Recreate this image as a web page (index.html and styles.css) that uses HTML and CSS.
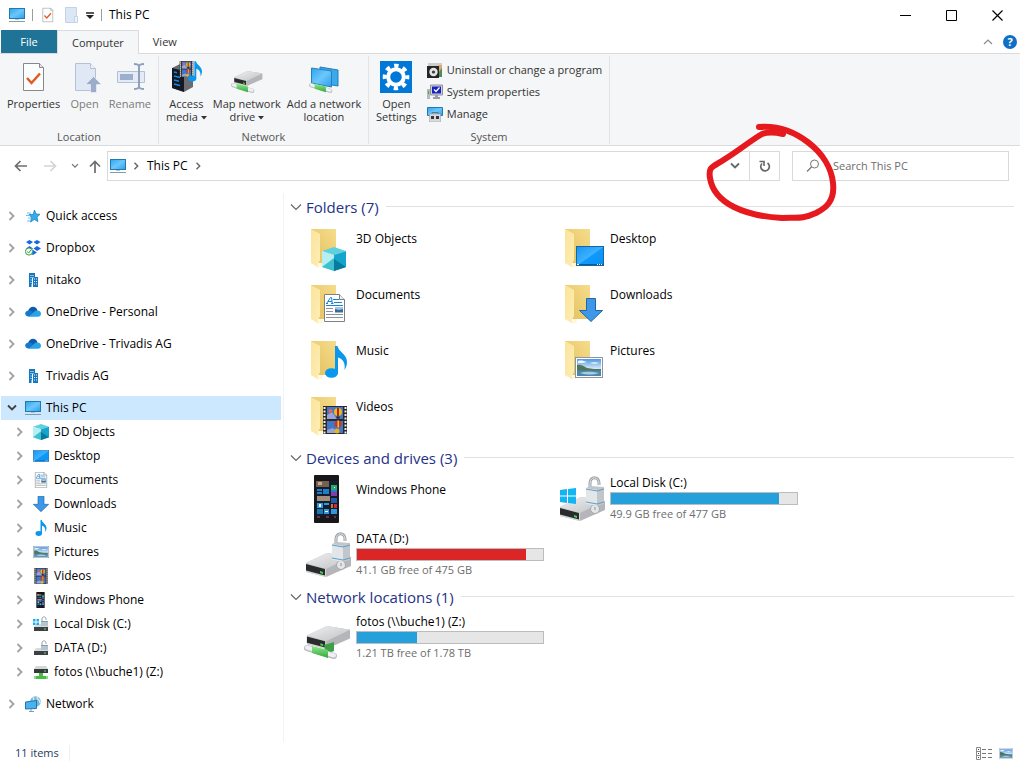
FILE: index.html
```html
<!DOCTYPE html>
<html lang="en">
<head>
<meta charset="utf-8">
<meta name="viewport" content="width=device-width, initial-scale=1">
<title>This PC</title>
<link rel="stylesheet" href="styles.css">
</head>
<body>
<svg class="sprite" width="0" height="0" aria-hidden="true">
  <defs>
    <linearGradient id="g-screen" x1="0" y1="0" x2="1" y2="1"><stop offset="0" stop-color="#2ba4f0"/><stop offset=".5" stop-color="#6cc7fb"/><stop offset="1" stop-color="#2a9df0"/></linearGradient>
    <linearGradient id="g-desk" x1="0" y1="0" x2="1" y2="1"><stop offset="0" stop-color="#1593f7"/><stop offset=".5" stop-color="#3eb2ff"/><stop offset=".52" stop-color="#0f99fb"/><stop offset="1" stop-color="#0a91f5"/></linearGradient>
    <linearGradient id="g-flap" x1="0" y1="0" x2="1" y2="1"><stop offset="0" stop-color="#fbe49b"/><stop offset="1" stop-color="#fdeeb4"/></linearGradient>
    <linearGradient id="g-back" x1="0" y1="1" x2="1" y2="0"><stop offset="0" stop-color="#e3bf5d"/><stop offset="1" stop-color="#f6dc8b"/></linearGradient>
    <linearGradient id="g-metal" x1="0" y1="0" x2="1" y2="1"><stop offset="0" stop-color="#f1f1f2"/><stop offset="1" stop-color="#bfc0c3"/></linearGradient>
    <linearGradient id="g-sky" x1="0" y1="0" x2="0" y2="1"><stop offset="0" stop-color="#4f97e2"/><stop offset=".6" stop-color="#dcedf8"/></linearGradient>
    <linearGradient id="g-green" x1="0" y1="0" x2="0" y2="1"><stop offset="0" stop-color="#8ee88d"/><stop offset="1" stop-color="#34a83c"/></linearGradient>
  </defs>

  <symbol id="i-pc" viewBox="0 0 16 16"><rect x=".5" y="1.5" width="15" height="10" fill="url(#g-screen)" stroke="#2379ad"/><path d="M6 12h4v1H6z" fill="#a9c7d8"/><path d="M0 14.5h16" stroke="#8a9aa4"/></symbol>
  <symbol id="i-cube" viewBox="0 0 24 24"><path d="M12 0l12 4-12 4L0 4z" fill="#5fd0e0"/><path d="M0 4l12 4v16L0 20z" fill="#b4eff3"/><path d="M0 20l12-9v13z" fill="#3fbfd0"/><path d="M12 8l12-4v16l-12 4z" fill="#16a4cd"/><path d="M12 24V12l12 8z" fill="#087a9c"/></symbol>
  <symbol id="i-desktop" viewBox="0 0 28 20"><rect x=".5" y=".5" width="27" height="19" fill="url(#g-desk)" stroke="#17679f"/><path d="M1 18h26v1H1z" fill="#0a5c98"/><path d="M1 18h2v1H1zM21 18h1v1h-1zm2 0h1v1h-1zm2 0h1v1h-1z" fill="#fff"/></symbol>
  <symbol id="i-doc" viewBox="0 0 21 28"><path d="M.5.500h15l5 5v22H.5z" fill="#fff" stroke="#7d8184"/><path d="M15.500.5v5h5" fill="#eee" stroke="#7d8184"/><path d="M2.500 9.500L6.500 3.500h1l.8 6M4 7.500h4M2 9.500h2M7 9.500h2.500" fill="none" stroke="#1b84d2"/><path d="M9 5.500h6M10 8.500h8M2 11.500h17" stroke="#1b84d2"/><path d="M2 14.500h7M2 17.500h7M2 20.500h17M2 23.500h17" stroke="#8c9296"/><path d="M11 13h8v5.500h-8z" fill="#3c6c92"/><path d="M11 13h8v2l-4 1-4-1z" fill="#9dc9ea"/></symbol>
  <symbol id="i-down" viewBox="0 0 24 24"><path d="M7.500.5h9v12h7L12 23.500.5 12.500h7z" fill="#3e97e8" stroke="#1d69a8"/></symbol>
  <symbol id="i-note" viewBox="0 0 22 32"><ellipse cx="6.500" cy="27" rx="6.500" ry="4.800" fill="#0a97ee"/><path d="M10 27V0h2.500c1 6 9.500 8 9.500 16 0 3-1 6-2.500 8 1-6-1-11-6.500-12.500V27z" fill="#0a97ee"/></symbol>
  <symbol id="i-picture" viewBox="0 0 28 21"><rect x=".5" y=".5" width="27" height="20" fill="#fff" stroke="#8997a0"/><path d="M2 2h24v17H2z" fill="url(#g-sky)"/><path d="M3 4c3-1 6 0 9 1-3 1-6 1-9 1zM15 6c3-1 6-1 9 0-3 1-6 1-9 0z" fill="#f2f8fd"/><path d="M2 8c4-1 6 1 10 3 5 1 9 1 14 1v2H2z" fill="#50765a"/><path d="M2 13.500h24V19H2z" fill="#4d87b0"/><path d="M5 16c6-2 12-1 19 0-6 2-12 2-19 0z" fill="#a9cde0"/></symbol>
  <symbol id="i-film" viewBox="0 0 24 28"><path d="M0 0h24v28H0z" fill="#2b2a28"/><path d="M1.500 1v27M22.500 1v27" stroke="#f2f2f2" stroke-width="2" stroke-dasharray="2 1.500"/><path d="M4 1h16v12H4zM4 15h16v12H4z" fill="#4277c8"/><path d="M4 9l5-3 5 7H4zM4 24l6-2 5 5H4z" fill="#9ba2d6"/><circle cx="15" cy="6" r="4" fill="#eeb720"/><path d="M14 2h2v8h-2z" fill="#a8291f"/><path d="M13.500 10.500h3v2h-3z" fill="#3b1d24"/><circle cx="15" cy="18" r="3.500" fill="#c23a2b"/><path d="M14.500 14.500h1.500v7h-1.500z" fill="#f0c02c"/><circle cx="14" cy="25" r="2.500" fill="#e9b31f"/><circle cx="7.500" cy="5" r="2" fill="#e1675c"/></symbol>
  <symbol id="i-folder" viewBox="0 0 48 48"><path d="M7 5h25v34H7z" fill="url(#g-back)"/><path d="M7 5l9 5v26l-2 4 1 4-8-5z" fill="url(#g-flap)"/><path d="M15.500 39h3v5l-4-2z" fill="#fff6dc"/></symbol>
  <symbol id="i-f-cube" viewBox="0 0 48 48"><use href="#i-folder"/><use href="#i-cube" x="18" y="23" width="24" height="24"/></symbol>
  <symbol id="i-f-desk" viewBox="0 0 48 48"><use href="#i-folder"/><use href="#i-desktop" x="18" y="22" width="28" height="20"/></symbol>
  <symbol id="i-f-doc" viewBox="0 0 48 48"><use href="#i-folder"/><use href="#i-doc" x="20" y="14" width="21" height="28"/></symbol>
  <symbol id="i-f-down" viewBox="0 0 48 48"><use href="#i-folder"/><use href="#i-down" x="21" y="18" width="24" height="24"/></symbol>
  <symbol id="i-f-note" viewBox="0 0 48 48"><use href="#i-folder"/><use href="#i-note" x="21" y="10" width="22" height="32"/></symbol>
  <symbol id="i-f-pic" viewBox="0 0 48 48"><use href="#i-folder"/><use href="#i-picture" x="17" y="21" width="28" height="21"/></symbol>
  <symbol id="i-f-film" viewBox="0 0 48 48"><use href="#i-folder"/><use href="#i-film" x="19" y="14" width="24" height="28"/></symbol>

  <symbol id="i-phone" viewBox="0 0 48 48"><rect x="10" y="0" width="25" height="48" rx="1" fill="#17171a"/><path d="M12 6h21v35H12z" fill="#151d2d"/><path d="M12 6h13v6H12z" fill="#76604f"/><path d="M14 7h4v3h-4z" fill="#c9a88d"/><path d="M27 12h6v5h-6zM19 14h6v5h-6zM13 14h5v2h-5zM13 17h5v2h-5z" fill="#1c7fc9"/><path d="M27 10h6v5h-6z" fill="#2aa772"/><path d="M27 17h6v4h-6z" fill="#843ba8"/><path d="M13 21h13v5H13z" fill="#a48d79"/><path d="M27 23h6v5h-6z" fill="#245ba6"/><path d="M13 28h6v5h-6zM20 28h5v2h-5zM20 34h5v5h-5zM27 34h6v5h-6z" fill="#2b9ae0"/><path d="M27 29h2v4h-2z" fill="#e46922"/><path d="M30 29h3v4h-3z" fill="#c52f35"/><path d="M13 34h6v5h-6z" fill="#1879b8"/><path d="M13 42h3M22 42h3M30 42h2" stroke="#b4577c"/><path d="M15 29h2v3h-2zM21 36h3v1h-3zM30 12h1v1h-1z" fill="#fff"/></symbol>
  <symbol id="i-box" viewBox="0 0 48 24"><path d="M2 10L23 0l24 4v9L22 24 2 19z" fill="#b5b6b9"/><path d="M2 10L23 0l24 4-25 12z" fill="url(#g-metal)"/><path d="M2 10l20 6v8L2 19z" fill="#d7d7d8"/><path d="M2 11l19 5v6.500L2 17.500z" fill="#292b2d"/><path d="M16 18l3 1v2l-3-1z" fill="#3edb44"/></symbol>
  <symbol id="i-lock" viewBox="0 0 20 38"><path d="M5 16V7c0-7 9-7 9 0v2" fill="none" stroke="#9da3a8" stroke-width="3"/><path d="M5 16V7c0-7 9-7 9 0v2" fill="none" stroke="#dfe2e4"/><circle cx="10" cy="33" r="4.500" fill="#e4e5e7" stroke="#a5a8ab"/><path d="M1 12l5-2 13 1v17l-7 2-11-2z" fill="#c2c6ca"/><path d="M1 12l11 2v16L1 28z" fill="#e3e6e8"/><path d="M1 13l11 2 7-2M1 26l11 2 7-2" fill="none" stroke="#5aa0cc"/><path d="M10 31v3" stroke="#8d9194"/></symbol>
  <symbol id="i-drive" viewBox="0 0 48 48"><use href="#i-box" x="0" y="22" width="48" height="24"/><use href="#i-lock" x="27" y="1" width="20" height="38"/></symbol>
  <symbol id="i-winlogo" viewBox="0 0 16 16"><path d="M0 2l7-1v6.500H0zM8 1l8-1v7.500H8zM0 8.500h7V15l-7-1zM8 8.500h8V16l-8-1z" fill="#12b4f3"/></symbol>
  <symbol id="i-sysdrive" viewBox="0 0 48 48"><use href="#i-drive"/><use href="#i-winlogo" x="2" y="13" width="16" height="16"/></symbol>
  <symbol id="i-pipe" viewBox="0 0 34 14"><path d="M3 3l27 8" stroke="#babec0" stroke-width="6" stroke-linecap="round"/><path d="M3 2.500l27 8" stroke="#eff0f1" stroke-width="4" stroke-linecap="round"/><path d="M8 1l16 4v8L8 8z" fill="url(#g-green)"/></symbol>
  <symbol id="i-netdrive" viewBox="0 0 48 48"><use href="#i-box" x="1" y="12" width="46" height="23"/><path d="M20 31l10-3v9l-8 3z" fill="#3f9f48"/><use href="#i-pipe" x="0" y="31" width="34" height="14"/></symbol>

  <symbol id="i-sm-drive" viewBox="0 0 16 16"><path d="M3 8h11l2 3H1z" fill="#d9dadb"/><path d="M1 11h14v4H1z" fill="#3b4042"/><path d="M11 12.500h2v1h-2z" fill="#5fe066"/><path d="M9 6V3c0-3 4-3 4 0v1" fill="none" stroke="#9ba3a9"/><path d="M8 5h7v5H8z" fill="#b5c6d2"/><path d="M8 5.500h7" stroke="#7f9fb5"/></symbol>
  <symbol id="i-sm-sys" viewBox="0 0 16 16"><use href="#i-sm-drive"/><path d="M0 3h2.500v2.500H0zM3.500 3H6v2.500H3.500zM0 6.500h2.500V9H0zM3.500 6.500H6V9H3.500z" fill="#17b0ee"/></symbol>
  <symbol id="i-sm-net" viewBox="0 0 16 16"><path d="M3 2h10l2 3H1z" fill="#d5d6d7"/><path d="M1 5h14v4H1z" fill="#35393b"/><path d="M11 6.500h2v1h-2z" fill="#5fe066"/><path d="M6 9h4v3h4v3H2v-3h4z" fill="#4bbb47"/><path d="M1 12h2v3H1zM13 12h2v3h-2z" fill="#8fd98c"/></symbol>
  <symbol id="i-star" viewBox="0 0 16 16"><path d="M9.500 2l1.500 4 4 .3-3 2.900 1 4.300-3.700-2L5.500 14l1-4.500L4 6.500h4z" fill="#35abe9" stroke="#1f86c6" stroke-width=".8"/><path d="M2 5h4M1 7.500h4M3 10h3M2 13h3" stroke="#6cc1ec"/></symbol>
  <symbol id="i-dropbox" viewBox="0 0 16 16"><path d="M4.500 0l3.500 2-3.500 2.500L1 2zM12 0l3.500 2L12 4.500 8.500 2zM12 6l4 2.500-4 2.500-3.500-2.500zM4.500 6L8 8.500 4.500 11 1 8.500zM8 10l4 2.500L8 15l-4-2z" fill="#1767e8"/><circle cx="4" cy="11.500" r="3.600" fill="#f2fbf2" stroke="#3c9d4a"/><path d="M2.300 11.500l1.300 1.500L6 10" fill="none" stroke="#3c9d4a"/></symbol>
  <symbol id="i-building" viewBox="0 0 16 16"><path d="M4 1h6v4h3v10H8v-3H6.500v3H4z" fill="#1577be"/><path d="M5.500 3h1v1h-1zm2 0h1v1h-1zm-2 2h1v1h-1zm2 0h1v1h-1zm-2 2.500h1v1h-1zm0 2.500h1v1h-1zM9 6.500h1v1H9zm2 0h1v1h-1zM9 9h1v1H9zm2 0h1v1h-1zm-2 2.500h1v1H9zm2 0h1v1h-1z" fill="#fff"/><path d="M7.500 6v6" stroke="#fff"/></symbol>
  <symbol id="i-cloud" viewBox="0 0 16 16"><path d="M3 7.500C4 2 11 1 12.500 6.500L8 12H4z" fill="#0c5ea9"/><path d="M3.500 12.500C-1 12.500-1 6.500 4 6.500c2 0 3 1 4 1.500l-3 4.500z" fill="#1479cc"/><path d="M3.500 12.800L9 8c2-2.500 7-1.500 7 1.800 0 2-1.500 3-3 3z" fill="#2aa1e8"/></symbol>
  <symbol id="i-network" viewBox="0 0 16 16"><circle cx="10.500" cy="5.500" r="5.300" fill="#77b8da"/><path d="M8 1c2 2-1 4 1 6M12 1c0 3 3 2 3 6" stroke="#d0e8ef" stroke-width="1.500" fill="none"/><path d="M.5 6l11-1.500v8L.5 13z" fill="#48b2f3" stroke="#2474a8"/><path d="M4 15.500h5M6 13v2" stroke="#8a9aa4"/></symbol>

  <symbol id="i-right" viewBox="0 0 8 10"><path d="M1.500 1l4 4-4 4" fill="none" stroke="currentColor" stroke-width="1.800"/></symbol>
  <symbol id="i-open" viewBox="0 0 10 8"><path d="M1 1.500l4 4 4-4" fill="none" stroke="currentColor" stroke-width="1.800"/></symbol>
  <symbol id="i-thin" viewBox="0 0 12 8"><path d="M1 1.500l5 5 5-5" fill="none" stroke="currentColor" stroke-width="1.200"/></symbol>
  <symbol id="i-caret" viewBox="0 0 6 4"><path d="M0 0h6L3 3.500z" fill="currentColor"/></symbol>

  <symbol id="i-page-check" viewBox="0 0 32 32"><path d="M5.500 2.500h16l4 4v23h-20z" fill="#fcfdfe" stroke="#85898c"/><path d="M21.500 2.500v4h4" fill="#e6e6e6" stroke="#85898c"/><path d="M9 17l4.500 5L22 12.500" fill="none" stroke="#e25a20" stroke-width="2.500"/></symbol>
  <symbol id="i-page-up" viewBox="0 0 32 32"><path d="M6.500 2.500h15l5 5v22h-20z" fill="#dfe8f4" stroke="#b4c2d8"/><path d="M21.500 2.500v5h5" fill="#f0f4fa" stroke="#b4c2d8"/><path d="M24.500 15.500l8 8h-5v8h-6v-8h-5z" fill="#9dadc9" stroke="#f4f6f9" stroke-width=".6"/></symbol>
  <symbol id="i-rename" viewBox="0 0 32 32"><path d="M3.500 10.500h27v11h-27z" fill="#e4ebf5" stroke="#b3c1d7"/><path d="M6 13h13v6H6z" fill="#9cafce"/><path d="M20 3c3 0 4.500.5 5 2 .5-1.500 2-2 5-2M20 28c3 0 4.500-.5 5-2 .5 1.500 2 2 5 2M25 4v23" fill="none" stroke="#8fa0bd" stroke-width="2"/></symbol>
  <symbol id="i-media" viewBox="0 0 32 32"><path d="M2 7l8-4 13 2v21l-9 5-12-4z" fill="#6a6c70"/><path d="M2 7l12 3v21L2 27z" fill="#141a22"/><path d="M4 11l3 .7M4 15l6 1.500M4 19l5 1.200M4 23l6 1.500" stroke="#1d86e3" stroke-width="1.500"/><use href="#i-film" x="9" y="0" width="15" height="16"/><use href="#i-note" x="18" y="0" width="14" height="21"/></symbol>
  <symbol id="i-mapdrive" viewBox="0 0 32 32"><use href="#i-box" x="2" y="10" width="30" height="15"/><use href="#i-pipe" x="0" y="22" width="24" height="10"/></symbol>
  <symbol id="i-addnet" viewBox="0 0 32 32"><path d="M12 6l18 3v16l-18-3z" fill="#3ca9ed" stroke="#227cb6"/><path d="M3.500 7l20 3v16l-20-4z" fill="url(#g-screen)" stroke="#2a7fb5"/><use href="#i-pipe" x="1" y="22" width="24" height="10"/></symbol>
  <symbol id="i-gear" viewBox="0 0 32 32"><path d="M0 0h32v32H0z" fill="#0078d7"/><circle cx="16" cy="16" r="11.300" fill="none" stroke="#fff" stroke-width="4" stroke-dasharray="4.400 4.475" stroke-dashoffset="2.200"/><circle cx="16" cy="16" r="7.800" fill="none" stroke="#fff" stroke-width="4"/></symbol>
  <symbol id="i-uninstall" viewBox="0 0 16 16"><path d="M1 1h14v5H1z" fill="#cdcfc6"/><path d="M11 3h4v12h-4z" fill="#d6a978"/><path d="M12 10l3-4v9h-3z" fill="#508b56"/><path d="M0 4h12v12H0z" fill="#252525"/><circle cx="6.500" cy="10" r="4.200" fill="#e4e4e6"/><circle cx="6.500" cy="10" r="1.600" fill="#3a3a3a"/></symbol>
  <symbol id="i-sysprop" viewBox="0 0 16 16"><path d="M0 5h3v10H0z" fill="#b8b9ba"/><path d="M1 7h1v3H1z" fill="#4caf3c"/><path d="M3.500 1h12v10h-12z" fill="#d2d3d9" stroke="#8f929b"/><path d="M5 2.500h9v7H5z" fill="#1a1fc2"/><path d="M7 5.500l2 2 3.500-4" fill="none" stroke="#fff" stroke-width="1.300"/><path d="M8 11h3v2h2v2H6v-2h2z" fill="#9b9ca4"/></symbol>
  <symbol id="i-manage" viewBox="0 0 16 16"><path d="M.5 1.500h15v8H.5z" fill="url(#g-screen)" stroke="#2379ad"/><path d="M5 8V6.500h6V8" fill="none" stroke="#6f7478"/><path d="M2.500 8h11v8h-11z" fill="#d8dadd" stroke="#94979b" stroke-width=".5"/><path d="M4 10h3v3H4zM9 10h3v3H9z" fill="#34383c"/></symbol>
</svg>

<div class="window">
  <header class="titlebar">
    <svg class="ic16"><use href="#i-pc"/></svg>
    <span class="tick"></span>
    <button class="quick" aria-label="Properties"><svg class="ic16" viewBox="4 0 24 32"><use href="#i-page-check" width="32" height="32"/></svg></button>
    <button class="quick" aria-label="New folder"><svg class="ic16" viewBox="0 0 16 16"><path d="M2.500.5h11v15h-11z" fill="#dce7f5" stroke="#c3d3e9"/><path d="M11.500 9.500h3v6h-3z" fill="#edf3fb" stroke="#c3d3e9"/></svg></button>
    <button class="quick more" aria-label="Customize toolbar"><svg width="8" height="8" viewBox="0 0 8 8"><path d="M0 1h8" stroke="#222" stroke-width="1.500"/><path d="M0 3h8L4 7z" fill="#222"/></svg></button>
    <span class="tick"></span>
    <h1 class="title">This PC</h1>
    <div class="controls">
      <button aria-label="Minimize"><svg width="11" height="11" viewBox="0 0 11 11"><path d="M0 5.500h11" stroke="#000"/></svg></button>
      <button aria-label="Maximize"><svg width="11" height="11" viewBox="0 0 11 11"><path d="M.5.500h10v10H.5z" fill="none" stroke="#000"/></svg></button>
      <button aria-label="Close"><svg width="11" height="11" viewBox="0 0 11 11"><path d="M.5.500l10 10m0-10l-10 10" stroke="#000" stroke-width="1.200"/></svg></button>
    </div>
  </header>

  <nav class="tabs" aria-label="Ribbon tabs">
    <button class="tab file">File</button>
    <button class="tab active">Computer</button>
    <button class="tab">View</button>
    <button class="collapse" aria-label="Minimize the ribbon"><svg width="10" height="6" viewBox="0 0 10 6"><path d="M1 5l4-4 4 4" fill="none" stroke="#8c8c8c" stroke-width="1.200"/></svg></button>
    <button class="help" aria-label="Help">?</button>
  </nav>

  <section class="ribbon" aria-label="Computer">
    <div class="group location">
      <div class="cmds">
        <button class="cmd"><svg class="ic32"><use href="#i-page-check"/></svg>Properties</button>
        <button class="cmd" disabled><svg class="ic32"><use href="#i-page-up"/></svg>Open</button>
        <button class="cmd" disabled><svg class="ic32"><use href="#i-rename"/></svg>Rename</button>
      </div>
      <div class="caption">Location</div>
    </div>
    <div class="group network">
      <div class="cmds">
        <button class="cmd"><svg class="ic32"><use href="#i-media"/></svg><span>Access<br>media <svg class="caret"><use href="#i-caret"/></svg></span></button>
        <button class="cmd"><svg class="ic32"><use href="#i-mapdrive"/></svg><span>Map network<br>drive <svg class="caret"><use href="#i-caret"/></svg></span></button>
        <button class="cmd"><svg class="ic32"><use href="#i-addnet"/></svg><span>Add a network<br>location</span></button>
      </div>
      <div class="caption">Network</div>
    </div>
    <div class="group system">
      <div class="cmds">
        <button class="cmd"><svg class="ic32"><use href="#i-gear"/></svg><span>Open<br>Settings</span></button>
        <div class="stack">
          <button class="line"><svg class="ic16"><use href="#i-uninstall"/></svg>Uninstall or change a program</button>
          <button class="line"><svg class="ic16"><use href="#i-sysprop"/></svg>System properties</button>
          <button class="line"><svg class="ic16"><use href="#i-manage"/></svg>Manage</button>
        </div>
      </div>
      <div class="caption">System</div>
    </div>
  </section>

  <div class="navrow">
    <div class="arrows">
      <button aria-label="Back"><svg width="13" height="12" viewBox="0 0 13 12"><path d="M13 6H1.500M6.500 1l-5 5 5 5" fill="none" stroke="#6d6d6d" stroke-width="1.700"/></svg></button>
      <button aria-label="Forward" disabled><svg width="13" height="12" viewBox="0 0 13 12"><path d="M0 6h11.500M6.500 1l5 5-5 5" fill="none" stroke="#d4d4d4" stroke-width="1.700"/></svg></button>
      <button class="slim" aria-label="Recent locations"><svg width="8" height="6" viewBox="0 0 10 8"><use href="#i-open" width="10" height="8"/></svg></button>
      <button class="slim" aria-label="Up"><svg width="12" height="13" viewBox="0 0 12 13"><path d="M6 13V1.500M1 6.500l5-5 5 5" fill="none" stroke="#6d6d6d" stroke-width="1.700"/></svg></button>
    </div>
    <div class="address">
      <svg class="ic16"><use href="#i-pc"/></svg>
      <svg class="crumb-arrow"><use href="#i-right"/></svg>
      <a class="crumb" href="#this-pc">This PC</a>
      <svg class="crumb-arrow"><use href="#i-right"/></svg>
      <button class="history" aria-label="Previous locations"><svg width="10" height="8"><use href="#i-open"/></svg></button>
      <button class="refresh" aria-label="Refresh"><svg width="12" height="13" viewBox="0 0 12 13"><path d="M3 3.500A4.300 4.300 0 1 0 8.500 3" fill="none" stroke="#666" stroke-width="1.700"/><path d="M.5 1.500h4.500V6" fill="none" stroke="#666" stroke-width="1.600"/></svg></button>
    </div>
    <label class="search">
      <svg width="14" height="14" viewBox="0 0 14 14"><circle cx="8.500" cy="5" r="4" fill="none" stroke="#777"/><path d="M5.500 8L1 12.500" stroke="#777" stroke-width="1.200"/></svg>
      <input type="search" placeholder="Search This PC" aria-label="Search This PC">
    </label>
    <svg class="mark" viewBox="0 0 130 98" aria-hidden="true"><path d="M52 3C87 0 123 28 126 59C128 77 119 84 109 89C93 96 91 93 75 94C39 92 7 80 3 54C1 42 6 43 18 35C34 25 43 17 55 10Q63 7 76 10" fill="none" stroke="#e61a1e" stroke-width="6" stroke-linecap="round" stroke-linejoin="round"/></svg>
  </div>

  <div class="body">
    <nav class="tree" aria-label="Navigation pane">
      <ul>
        <li><div class="row"><button aria-label="Expand"><svg><use href="#i-right"/></svg></button><a href="#quick"><svg class="ic16"><use href="#i-star"/></svg>Quick access</a></div></li>
        <li><div class="row"><button aria-label="Expand"><svg><use href="#i-right"/></svg></button><a href="#dropbox"><svg class="ic16"><use href="#i-dropbox"/></svg>Dropbox</a></div></li>
        <li><div class="row"><button aria-label="Expand"><svg><use href="#i-right"/></svg></button><a href="#nitako"><svg class="ic16"><use href="#i-building"/></svg>nitako</a></div></li>
        <li><div class="row"><button aria-label="Expand"><svg><use href="#i-right"/></svg></button><a href="#personal"><svg class="ic16"><use href="#i-cloud"/></svg>OneDrive - Personal</a></div></li>
        <li><div class="row"><button aria-label="Expand"><svg><use href="#i-right"/></svg></button><a href="#od-trivadis"><svg class="ic16"><use href="#i-cloud"/></svg>OneDrive - Trivadis AG</a></div></li>
        <li><div class="row"><button aria-label="Expand"><svg><use href="#i-right"/></svg></button><a href="#trivadis"><svg class="ic16"><use href="#i-building"/></svg>Trivadis AG</a></div></li>
        <li><div class="row selected"><button aria-label="Collapse"><svg><use href="#i-open"/></svg></button><a href="#this-pc"><svg class="ic16"><use href="#i-pc"/></svg>This PC</a></div>
          <ul>
            <li><div class="row"><button aria-label="Expand"><svg><use href="#i-right"/></svg></button><a href="#objects"><svg class="ic16"><use href="#i-cube"/></svg>3D Objects</a></div></li>
            <li><div class="row"><button aria-label="Expand"><svg><use href="#i-right"/></svg></button><a href="#desktop"><svg class="ic16"><use href="#i-desktop"/></svg>Desktop</a></div></li>
            <li><div class="row"><button aria-label="Expand"><svg><use href="#i-right"/></svg></button><a href="#documents"><svg class="ic16"><use href="#i-doc"/></svg>Documents</a></div></li>
            <li><div class="row"><button aria-label="Expand"><svg><use href="#i-right"/></svg></button><a href="#downloads"><svg class="ic16"><use href="#i-down"/></svg>Downloads</a></div></li>
            <li><div class="row"><button aria-label="Expand"><svg><use href="#i-right"/></svg></button><a href="#music"><svg class="ic16"><use href="#i-note"/></svg>Music</a></div></li>
            <li><div class="row"><button aria-label="Expand"><svg><use href="#i-right"/></svg></button><a href="#pictures"><svg class="ic16"><use href="#i-picture"/></svg>Pictures</a></div></li>
            <li><div class="row"><button aria-label="Expand"><svg><use href="#i-right"/></svg></button><a href="#videos"><svg class="ic16"><use href="#i-film"/></svg>Videos</a></div></li>
            <li><div class="row"><button aria-label="Expand"><svg><use href="#i-right"/></svg></button><a href="#phone"><svg class="ic16"><use href="#i-phone"/></svg>Windows Phone</a></div></li>
            <li><div class="row"><button aria-label="Expand"><svg><use href="#i-right"/></svg></button><a href="#c"><svg class="ic16"><use href="#i-sm-sys"/></svg>Local Disk (C:)</a></div></li>
            <li><div class="row"><button aria-label="Expand"><svg><use href="#i-right"/></svg></button><a href="#d"><svg class="ic16"><use href="#i-sm-drive"/></svg>DATA (D:)</a></div></li>
            <li><div class="row"><button aria-label="Expand"><svg><use href="#i-right"/></svg></button><a href="#z"><svg class="ic16"><use href="#i-sm-net"/></svg>fotos (\\buche1) (Z:)</a></div></li>
          </ul>
        </li>
        <li><div class="row"><button aria-label="Expand"><svg><use href="#i-right"/></svg></button><a href="#network"><svg class="ic16"><use href="#i-network"/></svg>Network</a></div></li>
      </ul>
    </nav>

    <main class="content">
      <section>
        <h2><svg class="thin"><use href="#i-thin"/></svg>Folders (7)</h2>
        <div class="tiles">
          <a class="tile" href="#objects"><svg class="ic48"><use href="#i-f-cube"/></svg><span class="name">3D Objects</span></a>
          <a class="tile" href="#desktop"><svg class="ic48"><use href="#i-f-desk"/></svg><span class="name">Desktop</span></a>
          <a class="tile" href="#documents"><svg class="ic48"><use href="#i-f-doc"/></svg><span class="name">Documents</span></a>
          <a class="tile" href="#downloads"><svg class="ic48"><use href="#i-f-down"/></svg><span class="name">Downloads</span></a>
          <a class="tile" href="#music"><svg class="ic48"><use href="#i-f-note"/></svg><span class="name">Music</span></a>
          <a class="tile" href="#pictures"><svg class="ic48"><use href="#i-f-pic"/></svg><span class="name">Pictures</span></a>
          <a class="tile" href="#videos"><svg class="ic48"><use href="#i-f-film"/></svg><span class="name">Videos</span></a>
        </div>
      </section>
      <section>
        <h2><svg class="thin"><use href="#i-thin"/></svg>Devices and drives (3)</h2>
        <div class="tiles">
          <a class="tile" href="#phone"><svg class="ic48"><use href="#i-phone"/></svg><span class="name">Windows Phone</span></a>
          <a class="tile" href="#c"><svg class="ic48"><use href="#i-sysdrive"/></svg><span class="disk"><span>Local Disk (C:)</span><span class="bar"><span class="fill" style="width:90.5%"></span></span><span class="free">49.9 GB free of 477 GB</span></span></a>
          <a class="tile" href="#d"><svg class="ic48"><use href="#i-drive"/></svg><span class="disk"><span>DATA (D:)</span><span class="bar"><span class="fill full" style="width:91%"></span></span><span class="free">41.1 GB free of 475 GB</span></span></a>
        </div>
      </section>
      <section>
        <h2><svg class="thin"><use href="#i-thin"/></svg>Network locations (1)</h2>
        <div class="tiles">
          <a class="tile" href="#z"><svg class="ic48"><use href="#i-netdrive"/></svg><span class="disk"><span>fotos (\\buche1) (Z:)</span><span class="bar"><span class="fill" style="width:32%"></span></span><span class="free">1.21 TB free of 1.78 TB</span></span></a>
        </div>
      </section>
    </main>
  </div>

  <footer class="status">
    <span class="count">11 items</span>
    <div class="views">
      <button aria-label="Details view"><svg width="16" height="13" viewBox="0 0 16 13"><path d="M.5.500h4v12h-4zM.5 4.500h4M.5 8.500h4" fill="#fff" stroke="#8a8a8a"/><path d="M2 2.500h1M2 6.500h1M2 10.500h1" stroke="#444"/><path d="M6 2.500h4m2 0h4M6 6.500h4m2 0h4M6 10.500h4m2 0h4" stroke="#777"/></svg></button>
      <button aria-label="Large icons view"><svg width="14" height="11" viewBox="0 0 28 21"><use href="#i-picture" width="28" height="21"/></svg></button>
    </div>
  </footer>
</div>
</body>
</html>
```
FILE: styles.css
```css
* { box-sizing: border-box; }

body {
  margin: 0;
  background: #fff;
  color: #000;
  font: 12px/16px "Open Sans", "Noto Sans", sans-serif;
}

button {
  margin: 0;
  padding: 0;
  border: 0;
  background: none;
  color: inherit;
  font: inherit;
}

a { color: inherit; text-decoration: none; }
ul { margin: 0; padding: 0; list-style: none; }
svg { display: block; flex: none; }

.sprite { position: absolute; }
.ic16 { width: 16px; height: 16px; }
.ic32 { width: 32px; height: 32px; }
.ic48 { width: 48px; height: 48px; }

.window {
  display: flex;
  flex-direction: column;
  min-height: 100vh;
}

/* Title bar */
.titlebar {
  display: flex;
  align-items: center;
  gap: 7px;
  height: 30px;
  padding-left: 9px;
}
.tick { width: 1px; height: 12px; background: #9c9c9c; }
.quick { padding: 0; }
.more { padding: 2px 0 0; }
.title { margin: 0; font-size: 12px; font-weight: 400; }
.controls { display: flex; align-self: stretch; margin-left: auto; }
.controls button { display: grid; place-items: center; width: 46px; }

/* Ribbon tabs */
.tabs {
  display: flex;
  align-items: stretch;
  height: 24px;
  padding: 0 3px 0 1px;
  border-bottom: 1px solid #dadbdc;
  color: #333;
  font-size: 11px;
}
.tab { padding: 0 14px; }
.file { width: 56px; background: #1f7396; color: #fff; }
.active {
  height: 24px;
  border: 1px solid #dadbdc;
  border-bottom: 0;
  background: #f5f6f7;
}
.collapse { margin-left: auto; padding: 0 10px; }
.help {
  align-self: center;
  width: 14px;
  height: 14px;
  border-radius: 50%;
  background: #0f6fc5;
  color: #fff;
  font-weight: 700;
  line-height: 14px;
}

/* Ribbon */
.ribbon {
  display: flex;
  padding: 2px 0 1px;
  border-bottom: 1px solid #dadbdc;
  background: #f5f6f7;
  color: #333;
  font-size: 11px;
}
.group {
  display: flex;
  flex-direction: column;
  justify-content: space-between;
  height: 88px;
  padding: 5px 4px 0;
  border-right: 1px solid #e2e3e4;
}
.location { width: 159px; }
.network { width: 210px; }
.system { width: 241px; }
.cmds { display: flex; justify-content: space-between; }
.system .cmds { justify-content: flex-start; gap: 7px; }
.cmd {
  display: flex;
  flex-direction: column;
  align-items: center;
  gap: 4px;
  padding: 0 3px;
  line-height: 13px;
  white-space: nowrap;
}
.cmd:disabled { color: #7a7a7a; }
.caret { display: inline-block; width: 6px; height: 4px; vertical-align: middle; }
.stack { display: flex; flex-direction: column; }
.line {
  display: flex;
  align-items: center;
  gap: 4px;
  height: 22px;
  white-space: nowrap;
}
.stack .line:first-child { height: 18px; margin-bottom: 2px; }
.caption { color: #555; text-align: center; line-height: 14px; }

/* Address row */
.navrow {
  position: relative;
  display: flex;
  align-items: center;
  height: 40px;
  padding: 0 11px 0 5px;
}
.arrows { display: flex; align-items: center; color: #777; width: 102px; }
.arrows button { display: grid; place-items: center; width: 30px; height: 30px; }
.arrows .slim { width: 20px; }
.address {
  display: flex;
  flex: 1;
  align-items: center;
  height: 30px;
  padding-left: 2px;
  border: 1px solid #d9d9d9;
}
.crumb-arrow { width: 7px; height: 8px; margin: 0 7px; color: #666; }
.history { margin-left: auto; padding: 0 9px; color: #666; }
.refresh {
  display: grid;
  place-items: center;
  align-self: stretch;
  width: 30px;
  border-left: 1px solid #d9d9d9;
}
.search {
  display: flex;
  align-items: center;
  gap: 13px;
  width: 217px;
  height: 30px;
  margin-left: 12px;
  padding-left: 13px;
  border: 1px solid #d9d9d9;
}
.search input {
  flex: 1;
  min-width: 0;
  padding: 0;
  border: 0;
  outline: 0;
  background: none;
  color: #000;
  font: inherit;
  font-size: 11px;
}
.search input::placeholder { color: #6d6d6d; opacity: 1; }

/* Hand-drawn ring over the refresh area */
.mark {
  position: absolute;
  top: -22px;
  right: 183px;
  width: 130px;
  height: 98px;
  overflow: visible;
  pointer-events: none;
}

/* Body */
.body { display: flex; flex: 1; padding-top: 7px; }
.tree { width: 284px; padding: 3px 0 0 1px; border-right: 1px solid #f3f3f3; }
.tree li { margin-top: 8px; }
.tree li li { margin-top: 0; }
.row { display: flex; align-items: center; width: 280px; height: 24px; }
.row button {
  display: grid;
  place-items: center;
  width: 22px;
  height: 24px;
  color: #a3a3a3;
}
.row button svg { width: 10px; height: 10px; }
.row a { display: flex; align-items: center; gap: 5px; padding-left: 2px; }
.tree ul ul .row { padding-left: 8px; }
.selected { background: #cce8ff; }
.row.selected button { color: #404040; }

.content { flex: 1; padding-right: 6px; }
.content h2 {
  display: flex;
  align-items: center;
  height: 27px;
  margin: 0;
  padding-left: 6px;
  color: #1e3287;
  font-size: 15px;
  font-weight: 400;
}
.content h2::after { content: ""; flex: 1; height: 1px; margin-left: 7px; background: #e2e2e2; }
.thin { width: 12px; height: 8px; margin-right: 4px; color: #666; }
.tiles {
  display: grid;
  grid-template-columns: repeat(auto-fill, 254px);
  padding-left: 20px;
}
.tile { display: flex; gap: 4px; height: 56px; padding-top: 4px; }
.name { padding-top: 7px; }
.disk { display: flex; flex-direction: column; width: 188px; }
.bar {
  height: 13px;
  margin: 1px 0;
  border: 1px solid #bcbcbc;
  background: #e6e6e6;
}
.fill { display: block; height: 100%; background: #26a0da; }
.full { background: #da2626; }
.free { color: #6d6d6d; font-size: 11px; }

/* Status bar */
.status {
  display: flex;
  align-items: center;
  justify-content: space-between;
  height: 22px;
  padding: 0 7px 0 15px;
  color: #1e395b;
  font-size: 11px;
}
.count { padding-right: 10px; border-right: 1px solid #f0f0f0; }
.views { display: flex; align-items: center; gap: 7px; }
```
